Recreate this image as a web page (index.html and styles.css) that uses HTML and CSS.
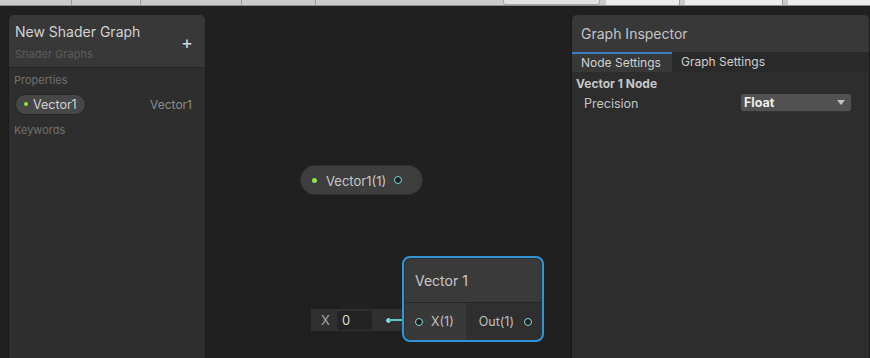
FILE: index.html
```html
<!DOCTYPE html>
<html lang="en">
<head>
  <meta charset="UTF-8">
  <title>Shader Graph</title>
  <link rel="stylesheet" href="styles.css">
</head>
<body>
  <div id="toolbar">
    <span class="tb-tab" style="width: 72px;"></span>
    <span class="tb-tab" style="width: 64px;"></span>
    <span class="tb-tab" style="width: 96px;"></span>
    <span class="tb-tab" style="width: 69px;"></span>
    <span class="tb-tab tb-wide"></span>
    <span class="tb-tab tb-light" style="width: 97px;"></span>
    <span class="tb-tab tb-white" style="width: 74px;"></span>
    <span class="tb-tab tb-white" style="width: 98px;"></span>
    <span class="tb-tab tb-white tb-last"></span>
  </div>

  <div id="main">
    <div id="blackboard">
      <div class="bb-header">
        <div class="bb-titles">
          <div class="bb-title">New Shader Graph</div>
          <div class="bb-subtitle">Shader Graphs</div>
        </div>
        <button class="bb-add" title="Add">+</button>
      </div>
      <div class="bb-section">Properties</div>
      <div class="bb-row">
        <span class="pill"><span class="dot-green"></span>Vector1</span>
        <span class="bb-type">Vector1</span>
      </div>
      <div class="bb-section">Keywords</div>
    </div>

    <div id="canvas">
      <div class="prop-node">
        <span class="dot-green"></span>
        <span class="prop-label">Vector1(1)</span>
        <span class="port"></span>
      </div>

      <div class="inline-field">
        <span class="inline-label">X</span>
        <span class="inline-input">0</span>
        <span class="inline-dot"></span>
      </div>
      <div class="edge"></div>

      <div class="node selected">
        <div class="node-title">Vector 1</div>
        <div class="node-ports">
          <div class="ports-in">
            <span class="port"></span>
            <span>X(1)</span>
          </div>
          <div class="ports-out">
            <span>Out(1)</span>
            <span class="port"></span>
          </div>
        </div>
      </div>
    </div>

    <div id="inspector">
      <div class="insp-header">Graph Inspector</div>
      <div class="insp-tabs">
        <div class="insp-tab active">Node Settings</div>
        <div class="insp-tab">Graph Settings</div>
      </div>
      <div class="insp-body">
        <div class="insp-heading">Vector 1 Node</div>
        <div class="insp-field">
          <span class="insp-label">Precision</span>
          <div class="dropdown">
            <span>Float</span>
            <svg viewBox="0 0 8 5" width="8" height="5"><path d="M0 0h8L4 5z" fill="#c4c4c4"/></svg>
          </div>
        </div>
      </div>
    </div>
  </div>
</body>
</html>
```

FILE: styles.css
```css
html, body {
  margin: 0;
  padding: 0;
  width: 870px;
  height: 358px;
  overflow: hidden;
  background: #202020;
  font-family: Inter, "Noto Sans", sans-serif;
  color: #c4c4c4;
}
#toolbar {
  display: flex;
  height: 5px;
  background: #cbcbcb;
  border-bottom: 1px solid #8c8c8c;
}
.tb-tab {
  height: 5px;
  border-right: 1px solid #9a9a9a;
  margin-right: 5px;
  box-sizing: border-box;
}
.tb-wide {
  flex: 0 0 182px;
  margin-right: 0;
  border-right: none;
}
.tb-light {
  background: #e2e2e2;
  border: 1px solid #a8a8a8;
  border-top: none;
  border-radius: 0 0 3px 3px;
  margin-right: 6px;
}
.tb-white {
  background: #ededed;
}
.tb-last {
  flex: 1;
  margin-right: 0;
  border-right: none;
}
#main {
  display: flex;
  height: 352px;
}

/* blackboard */
#blackboard {
  width: 198px;
  margin: 9px 0 0 8px;
  background: #2e2e2e;
  border-radius: 5px 5px 0 0;
  border-right: 1px solid #1c1c1c;
  border-left: 1px solid #1c1c1c;
  box-sizing: border-box;
}
.bb-header {
  display: flex;
  align-items: center;
  height: 53px;
  background: #383838;
  border-bottom: 1px solid #232323;
  border-radius: 5px 5px 0 0;
  box-sizing: border-box;
  padding: 0 10px 0 6px;
}
.bb-titles {
  flex: 1;
}
.bb-title {
  font-size: 14px;
  color: #d2d2d2;
  line-height: 18px;
  margin-top: 2px;
}
.bb-subtitle {
  font-size: 11px;
  color: #5c5c5c;
  margin-top: 6px;
}
.bb-add {
  background: none;
  border: none;
  padding: 0;
  color: #d8d8d8;
  font-size: 18px;
  font-family: Inter, sans-serif;
  margin: 3px 2px 0 0;
}
.bb-section {
  font-size: 11px;
  color: #6e6e6e;
  padding: 5px 0 0 5px;
  height: 16px;
}
.bb-row {
  display: flex;
  justify-content: space-between;
  align-items: center;
  padding: 4px 13px 0 6px;
  height: 22px;
  margin-bottom: 3px;
}
.pill {
  display: flex;
  align-items: center;
  gap: 5px;
  height: 21px;
  width: 71px;
  padding: 0 0 0 8px;
  background: #474747;
  border: 1px solid #262626;
  border-radius: 11px;
  font-size: 12.5px;
  color: #d0d0d0;
  box-sizing: border-box;
}
.bb-type {
  font-size: 12px;
  color: #8c8c8c;
}
.dot-green {
  width: 4px;
  height: 4px;
  border-radius: 50%;
  background: #8ee04d;
  display: inline-block;
}

/* graph canvas */
#canvas {
  flex: 1;
  position: relative;
}
.prop-node {
  position: absolute;
  left: 94px;
  top: 159px;
  width: 123px;
  height: 30px;
  display: flex;
  align-items: center;
  box-sizing: border-box;
  padding-left: 11px;
  background: #3e3e3e;
  border: 1px solid #303030;
  border-radius: 15px;
}
.prop-node .dot-green {
  width: 5px;
  height: 5px;
}
.prop-label {
  font-size: 13px;
  color: #c6c6c6;
  margin: 1px 8px 0 9px;
}
.port {
  width: 6px;
  height: 6px;
  border: 1.5px solid #80d8dc;
  border-radius: 50%;
  background: #1e1e1e;
  display: inline-block;
}
.inline-field {
  position: absolute;
  left: 105px;
  top: 303px;
  width: 92px;
  height: 22px;
  display: flex;
  align-items: center;
  background: #303030;
  box-sizing: border-box;
  padding-left: 10px;
}
.inline-label {
  font-size: 13px;
  color: #a8a8a8;
  width: 16px;
  flex: 0 0 16px;
}
.inline-input {
  flex: 0 0 35px;
  height: 19px;
  box-sizing: border-box;
  padding-left: 5px;
  background: #232323;
  border-radius: 3px;
  font-size: 13px;
  line-height: 19px;
  color: #dadada;
}
.inline-dot {
  width: 5px;
  height: 5px;
  border-radius: 50%;
  background: #7fdde0;
  border: 1.5px solid #141414;
  margin-left: 13px;
}
.edge {
  position: absolute;
  left: 183px;
  top: 313px;
  width: 27px;
  height: 2px;
  background: #5fc4c8;
}
.node {
  position: absolute;
  left: 196px;
  top: 250px;
  width: 142px;
  height: 86px;
  box-sizing: border-box;
  border: 2px solid #3294d6;
  border-radius: 8px;
  overflow: hidden;
  background: #2f2f2f;
  padding: 1px;
}
.node-title {
  height: 43px;
  background: #3a3a3a;
  border-bottom: 1px solid #262626;
  border-radius: 6px 6px 0 0;
  font-size: 14px;
  line-height: 44px;
  color: #c8c8c8;
  padding-left: 10px;
}
.node-ports {
  display: flex;
  height: 37px;
  font-size: 12.5px;
  color: #c0c0c0;
}
.ports-in {
  width: 61px;
  background: #393939;
  display: flex;
  align-items: center;
  gap: 8px;
  padding-left: 10px;
  box-sizing: border-box;
  border-radius: 0 0 0 6px;
}
.ports-out {
  flex: 1;
  display: flex;
  align-items: center;
  justify-content: flex-end;
  gap: 10px;
  padding-right: 9px;
}

/* inspector */
#inspector {
  width: 299px;
  margin-top: 9px;
  background: #2d2d2d;
  border-radius: 5px 5px 0 0;
  border-right: 1px solid #1a1a1a;
  border-left: 1px solid #1a1a1a;
  box-sizing: border-box;
}
.insp-header {
  height: 37px;
  background: #383838;
  border-radius: 5px 5px 0 0;
  font-size: 14px;
  color: #c4c4c4;
  line-height: 37px;
  padding-left: 9px;
}
.insp-tabs {
  display: flex;
  height: 20px;
  background: #2a2a2a;
}
.insp-tab {
  font-size: 12px;
  color: #d0d0d0;
  line-height: 20px;
  padding: 0 9px;
}
.insp-tab.active {
  width: 100px;
  box-sizing: border-box;
  background: #383838;
  border-top: 2px solid #3d7dc4;
  line-height: 18px;
}
.insp-body {
  padding: 4px 0 0 4px;
}
.insp-heading {
  font-size: 12px;
  font-weight: bold;
  color: #c8c8c8;
  line-height: 16px;
}
.insp-field {
  display: flex;
  align-items: center;
  justify-content: space-between;
  padding: 2px 18px 0 8px;
}
.insp-label {
  font-size: 12.5px;
  color: #c4c4c4;
}
.dropdown {
  width: 110px;
  height: 18px;
  box-sizing: border-box;
  background: #515151;
  border-radius: 3px;
  border-bottom: 1px solid #333;
  display: flex;
  align-items: center;
  justify-content: space-between;
  padding: 0 6px 0 3px;
  font-size: 12.5px;
  font-weight: bold;
  color: #ececec;
}
```
